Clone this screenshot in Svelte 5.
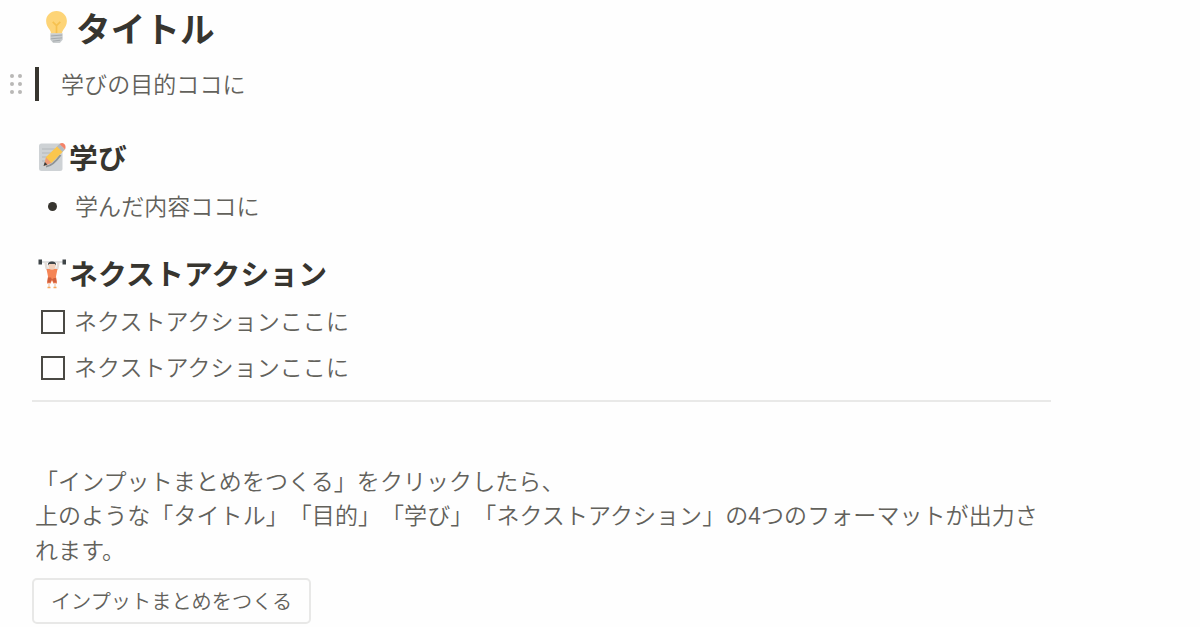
<script>
    const actions = $state([
        { text: 'ネクストアクションここに', done: false },
        { text: 'ネクストアクションここに', done: false }
    ])

    const handleDots = [0, 1, 2, 3, 4, 5]
</script>

<main class="page">
    <h1 class="title">
        <svg class="bulb" viewBox="0 0 24 36">
            <path d="M12 1C5.600 1 1 5.600 1 11.700c0 4.100 2 6.700 3.800 9.200.9 1.300 1.200 2.400 1.400 4.100h11.600c.2-1.700.5-2.800 1.400-4.100 1.800-2.500 3.800-5.100 3.800-9.200C23 5.600 18.400 1 12 1z" fill="#fdd477" />
            <path d="M8 12.500l4 4 4-4M12 16v8.500" fill="none" stroke="#f6c14f" stroke-width="1.800" />
            <path d="M5.500 24.500h13v7l-3 3.500h-7l-3-3.500z" fill="#c8ccce" />
            <path d="M6 27.500l12-1M6 30.500l12-1M8 33l8-1" stroke="#a3a8ab" stroke-width="1" />
        </svg>
        <span>タイトル</span>
    </h1>

    <div class="quoteRow">
        <div class="handle">
            {#each handleDots as dot (dot)}
                <i></i>
            {/each}
        </div>
        <blockquote>学びの目的ココに</blockquote>
    </div>

    <h2 class="learning">
        <svg class="memo" viewBox="0 0 28 30">
            <rect x="1" y="1.500" width="23.500" height="27.500" rx="2.500" fill="#ced2d5" />
            <path d="M4 7h13M4 11h11M4 15h8M4 19h4" stroke="#b3b8bb" stroke-width="1.200" />
            <path d="M8 24.500c6-.5 10-5 14.500-11.500" fill="none" stroke="#8f9496" stroke-width="2" />
            <path d="M7 21l1-6L19.500 4l5.500 5.500L13.500 21z" fill="#fbc64d" />
            <path d="M8 15.500l5.500 5.500L6 24z" fill="#ee9b78" />
            <path d="M6.800 20l2.500 2.500L5.500 24z" fill="#3b3c3b" />
            <path d="M19 4.500l2.500-2.500 5.500 5.500-2.500 2.500z" fill="#b4babe" />
            <path d="M21.500 2C23.500.5 25 .7 26.300 2s1.700 3.300.7 5.500z" fill="#f38268" />
        </svg>
        <span>学び</span>
    </h2>
    <ul>
        <li><span>学んだ内容ココに</span></li>
    </ul>

    <h2 class="next">
        <svg class="lifter" viewBox="0 0 28 30">
            <path d="M3 3h22" stroke="#c9cccd" stroke-width="1.200" />
            <path d="M.5.500h3.500v5H.5zM24.500.500h3.500v5h-3.500z" fill="#3f4548" />
            <path d="M7.500 3L8.500 9l3 2.500M20.500 3L19.500 9l-3 2.500" fill="none" stroke="#e3dcd7" stroke-width="2.400" />
            <path d="M8.500 10h11l-1.500 7.500 1 7h-3.700L14 21l-1.300 3.500H9l1-7z" fill="#f58556" />
            <path d="M10 18.500h3l1 2 2-1.500h2l.7 4.500h-3l-1.700-3-1.700 3h-3z" fill="#d05f3c" />
            <circle cx="14" cy="7" r="3.700" fill="#f1d0bb" />
            <path d="M10 6.500C9.500 3.500 11.500 2.500 14 2.500s4.500 1 4 4l-1-1.500h-6z" fill="#3f4548" />
            <path d="M11 24.500v3.500M17 24.500v3.500" stroke="#f1dfd3" stroke-width="2" />
            <path d="M9.500 28.500h3M15.500 28.500h3" stroke="#f9a75c" stroke-width="1.500" />
        </svg>
        <span>ネクストアクション</span>
    </h2>
    {#each actions as action}
        <label class="todo">
            <input type="checkbox" bind:checked={action.done}>
            <span>{action.text}</span>
        </label>
    {/each}

    <hr>

    <p>
        「インプットまとめをつくる」をクリックしたら、<br>
        上のような「タイトル」「目的」「学び」「ネクストアクション」の4つのフォーマットが出力されます。
    </p>
    <button>インプットまとめをつくる</button>
</main>

<style>
    :global(body) {
        background-color: #fefefe;
    }

    .page {
        display: flow-root;
        box-sizing: border-box;
        width: 1051px;
        height: 627px;
        padding-left: 32px;
        overflow: hidden;
        font-family: 'Noto Sans CJK JP', sans-serif;
        font-size: 23px;
        font-weight: 350;
        line-height: 34.6px;
        letter-spacing: 0.07px;
        color: #62615b;
        text-spacing-trim: space-all;
    }

    h1, h2 {
        display: flex;
        align-items: center;
        margin: 0px;
        color: #37352f;
        font-weight: 700;
    }

    svg {
        flex: none;
    }

    .title {
        height: 46px;
        padding: 8px 0px 0px 13px;
        box-sizing: border-box;
        font-size: 34.6px;
        gap: 8px;
    }

    .bulb {
        width: 23px;
        height: 34px;
    }

    .quoteRow {
        display: flex;
        align-items: center;
        gap: 12px;
        height: 34px;
        margin: 21px 0px 0px -22px;
    }

    .handle {
        display: grid;
        grid-template-columns: 4px 4px;
        gap: 4px;
        width: 13px;
    }

    .handle i {
        width: 4px;
        height: 4px;
        border-radius: 50%;
        background-color: #b9b8b6;
    }

    blockquote {
        height: 34px;
        margin: 0px;
        padding-left: 22px;
        border-left: 4px solid #37352f;
        line-height: 32px;
    }

    h2 {
        height: 40px;
        padding-left: 6px;
        font-size: 28.8px;
        letter-spacing: 0.15px;
        gap: 3px;
    }

    .learning {
        margin-top: 36px;
    }

    .memo, .lifter {
        width: 28px;
        height: 30px;
    }

    ul {
        margin: 11px 0px 0px;
        padding: 0px;
        list-style: none;
    }

    li {
        display: flex;
        align-items: center;
        gap: 18px;
        padding-left: 16px;
    }

    li span, .todo span {
        padding-bottom: 2px;
    }

    li::before {
        content: '';
        width: 9px;
        height: 9px;
        border-radius: 50%;
        background-color: #37352f;
    }

    .next {
        margin-top: 29px;
    }

    .todo {
        display: flex;
        align-items: center;
        gap: 9px;
        height: 46px;
        padding-left: 9px;
    }

    .next + .todo {
        margin-top: 5px;
    }

    input {
        appearance: none;
        box-sizing: border-box;
        width: 24px;
        height: 24px;
        margin: 0px;
        border: 2px solid #4a4944;
    }

    input:checked {
        background-color: #37352f;
    }

    hr {
        height: 2px;
        margin: 9px 0px 0px;
        border: none;
        background-color: #e9e9e8;
    }

    p {
        margin: 61px 0px 0px;
        padding-left: 3px;
    }

    button {
        display: block;
        box-sizing: border-box;
        width: 279px;
        height: 46px;
        margin-top: 12px;
        padding: 0px;
        border: 2px solid #e8e8e7;
        border-radius: 5px;
        background-color: transparent;
        color: #62615b;
        font-family: inherit;
        font-size: 20.2px;
        font-weight: 350;
        line-height: 30px;
    }
</style>
